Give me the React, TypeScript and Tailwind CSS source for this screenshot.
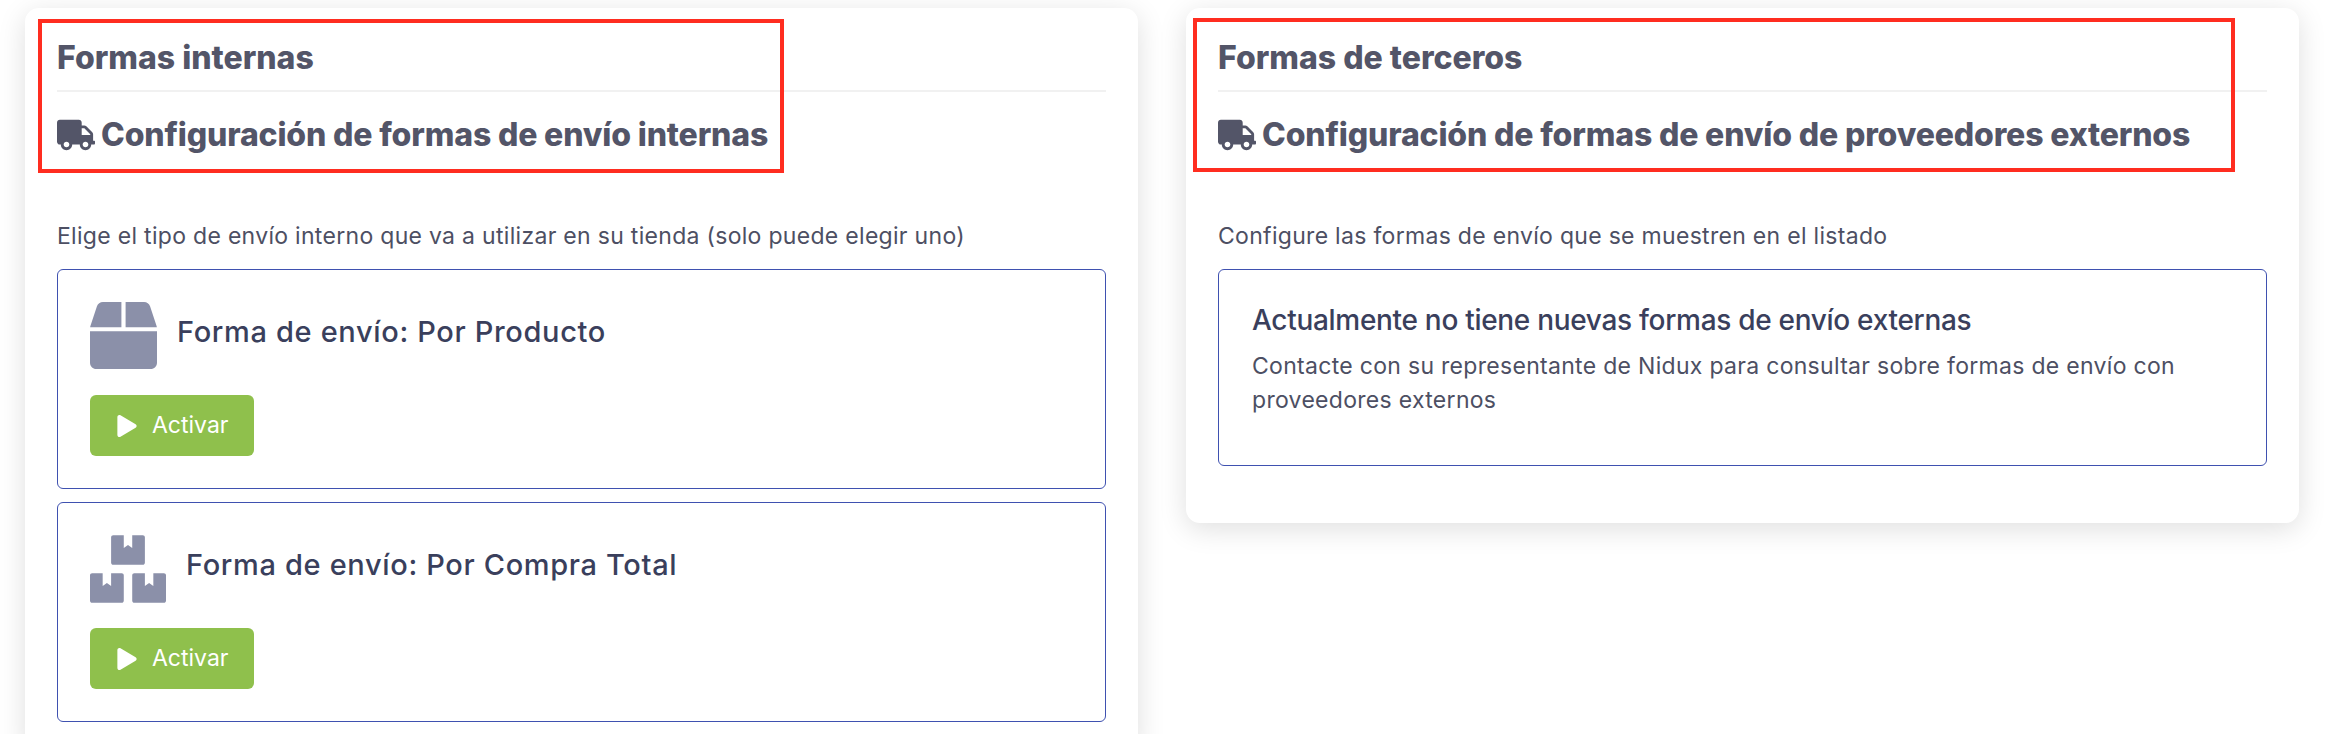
import React from 'react';
import { FaBox, FaBoxes, FaPlay, FaTruck } from 'react-icons/fa';

const ShippingOption: React.FC<{ icon: React.ReactNode; title: string; gap: string }> = ({ icon, title, gap }) => (
    <div className="h-[220px] rounded-[6px] border border-[#3f51b0] px-[32px] pt-[32px]">
        <div className={`flex h-[68px] items-start ${gap}`}>
            {icon}
            <h3 className="mt-[14px] text-[29px] leading-[32px] font-medium tracking-[0.65px] text-[#3a3f5c]">{title}</h3>
        </div>
        <button className="mt-[25px] flex h-[61px] w-[164px] items-center rounded-[6px] bg-[#8fc04c] pl-[27px] text-white">
            <FaPlay className="h-[22px] w-[20px]" />
            <span className="ml-[15px] text-[23px] leading-none">Activar</span>
        </button>
    </div>
);

const Header: React.FC<{ title: string; subtitle: string; redBox: string }> = ({ title, subtitle, redBox }) => (
    <div className="relative">
        <h2 className="pt-[32px] text-[32px] leading-[36px] font-extrabold text-[#535568]">{title}</h2>
        <div className="mt-[14px] h-[2px] bg-[#f1f1f1]" />
        <div className="mt-[26px] flex h-[34px] items-center">
            <FaTruck className="h-[34px] w-[38px] shrink-0 text-[#535568]" />
            <h2 className="ml-[6px] text-[32px] leading-[34px] font-extrabold tracking-[-0.15px] whitespace-nowrap text-[#535568]">{subtitle}</h2>
        </div>
        <div className={`absolute h-[154px] border-4 border-[#ff2d20] ${redBox}`} />
    </div>
);

export default function App() {
    return (
        <div className="flex h-[734px] items-start gap-[48px] overflow-hidden bg-white pt-[8px] pl-[25px] font-['Inter',sans-serif]">
            <section className="w-[1113px] shrink-0 rounded-[14px] bg-white px-[32px] pb-[32px] shadow-[0_6px_28px_rgba(0,0,0,0.13)]">
                <Header title="Formas internas" subtitle="Configuración de formas de envío internas" redBox="top-[11px] left-[-19px] w-[746px]" />
                <p className="mt-[67px] text-[23px] leading-[34px] tracking-[0.3px] text-[#4d4f63]">
                    Elige el tipo de envío interno que va a utilizar en su tienda (solo puede elegir uno)
                </p>
                <div className="mt-[16px] flex flex-col gap-[13px]">
                    <ShippingOption icon={<FaBox className="h-[67px] w-[67px] shrink-0 text-[#8b90a9]" />} title="Forma de envío: Por Producto" gap="gap-[20px]" />
                    <ShippingOption icon={<FaBoxes className="h-[68px] w-[76px] shrink-0 text-[#8b90a9]" />} title="Forma de envío: Por Compra Total" gap="gap-[20px]" />
                </div>
            </section>
            <section className="w-[1113px] shrink-0 rounded-[14px] bg-white px-[32px] shadow-[0_6px_28px_rgba(0,0,0,0.13)]">
                <Header title="Formas de terceros" subtitle="Configuración de formas de envío de proveedores externos" redBox="top-[10px] left-[-25px] w-[1042px]" />
                <p className="mt-[67px] text-[23px] leading-[34px] tracking-[0.3px] text-[#4d4f63]">
                    Configure las formas de envío que se muestren en el listado
                </p>
                <div className="mt-[16px] mb-[57px] h-[197px] rounded-[6px] border border-[#3f51b0] px-[33px] pt-[33px]">
                    <h3 className="text-[28px] leading-[34px] font-medium tracking-[-0.3px] text-[#3a3f5c]">Actualmente no tiene nuevas formas de envío externas</h3>
                    <p className="mt-[12px] text-[23px] leading-[34px] tracking-[0.3px] text-[#4d4f63]">
                        Contacte con su representante de Nidux para consultar sobre formas de envío con proveedores externos
                    </p>
                </div>
            </section>
        </div>
    );
}
